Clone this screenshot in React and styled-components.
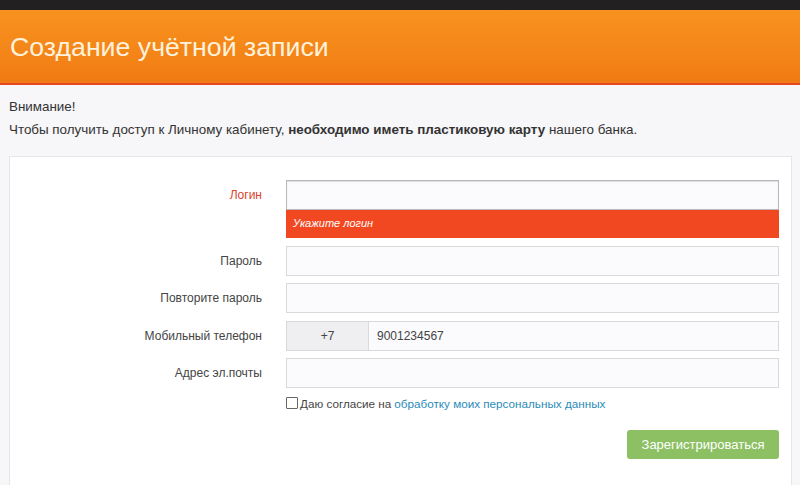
import React from 'react'
import styled, { createGlobalStyle } from 'styled-components'

const GlobalStyle = createGlobalStyle`
    html, body {
        margin: 0;
        padding: 0;
        background: #f7f6f8;
        font-family: 'Liberation Sans', Arial, sans-serif;
        color: #333;
    }
    * {
        box-sizing: border-box;
    }
`

const TopBar = styled.div`
    height: 10px;
    background: #232021;
`

const Header = styled.header`
    height: 75px;
    padding-left: 10px;
    display: flex;
    align-items: center;
    background: linear-gradient(to bottom, #f7921f 0%, #f48518 60%, #f07a14 100%);
    border-bottom: 2px solid #e4471d;
`

const Title = styled.h1`
    margin: 2px 0 0;
    font-size: 26.7px;
    font-weight: normal;
    color: #fff2dc;
`

const Notice = styled.div`
    padding: 10px 9px 0;
    font-size: 13.4px;
    line-height: 23px;
`

const Panel = styled.section`
    margin: 15px 8px 0 9px;
    padding: 23px 12px 40px 0;
    background: #fff;
    border: 1px solid #e6e5ea;
    border-bottom: none;
    display: flex;
    flex-direction: column;
    gap: 7.5px;
`

const Row = styled.div`
    display: flex;
    align-items: flex-start;
`

const Label = styled.label`
    width: 252px;
    flex-shrink: 0;
    margin-right: 24px;
    height: 30px;
    line-height: 30px;
    text-align: right;
    font-size: 12px;
    color: ${p => (p.$error ? '#d9432c' : '#444')};
`

const Field = styled.div`
    flex: 1;
    display: flex;
    flex-direction: column;
`

const Input = styled.input`
    width: 100%;
    min-width: 0;
    height: 30px;
    flex-shrink: 0;
    padding: 0 8px;
    border: 1px solid ${p => (p.$error ? '#b8b7bb' : '#d9d8dc')};
    box-shadow: ${p => (p.$error ? 'inset 0 1px 1px rgba(0,0,0,0.12)' : 'none')};
    background: #fbfafc;
    font-family: inherit;
    font-size: 12px;
    color: #444;
    outline: none;
`

const PhoneInput = styled(Input)`
    flex: 1;
`

const ErrorBar = styled.div`
    height: 28px;
    line-height: 26px;
    padding-left: 7px;
    background: #f24822;
    color: #fff;
    font-size: 11px;
    font-style: italic;
`

const PhoneGroup = styled.div`
    flex: 1;
    display: flex;
`

const Prefix = styled.div`
    width: 82px;
    flex-shrink: 0;
    height: 30px;
    line-height: 28px;
    text-align: center;
    background: #efeef1;
    border: 1px solid #d9d8dc;
    border-right: none;
    font-size: 12px;
    color: #444;
`

const Consent = styled.label`
    margin-left: 276px;
    margin-top: 1px;
    display: flex;
    align-items: center;
    font-size: 11.7px;
    color: #444;
`

const Box = styled.span`
    width: 12px;
    height: 12px;
    margin-right: 2px;
    border: 1px solid #666;
    background: #fff;
    border-radius: 1px;
`

const Link = styled.a`
    margin-left: 3px;
    color: #2a8bb8;
    text-decoration: none;
`

const Actions = styled.div`
    display: flex;
    justify-content: flex-end;
    margin-top: 13px;
`

const Button = styled.button`
    width: 152px;
    height: 29px;
    border: none;
    border-radius: 3px;
    background: #8cc063;
    color: #fff;
    font-family: inherit;
    font-size: 13px;
    cursor: pointer;
`

const fields = [
    { label: 'Пароль', type: 'password' },
    { label: 'Повторите пароль', type: 'password' },
]

export default function App() {
    return (
        <>
            <GlobalStyle />
            <TopBar />
            <Header>
                <Title>Создание учётной записи</Title>
            </Header>
            <Notice>
                <div>Внимание!</div>
                <div>
                    Чтобы получить доступ к Личному кабинету, <b>необходимо иметь пластиковую карту</b> нашего банка.
                </div>
            </Notice>
            <Panel>
                <Row>
                    <Label $error>Логин</Label>
                    <Field>
                        <Input $error />
                        <ErrorBar>Укажите логин</ErrorBar>
                    </Field>
                </Row>
                {fields.map(f => (
                    <Row key={f.label}>
                        <Label>{f.label}</Label>
                        <Field>
                            <Input type={f.type} />
                        </Field>
                    </Row>
                ))}
                <Row>
                    <Label>Мобильный телефон</Label>
                    <PhoneGroup>
                        <Prefix>+7</Prefix>
                        <PhoneInput defaultValue="9001234567" />
                    </PhoneGroup>
                </Row>
                <Row>
                    <Label>Адрес эл.почты</Label>
                    <Field>
                        <Input />
                    </Field>
                </Row>
                <Consent>
                    <Box />
                    Даю согласие на<Link href="#">обработку моих персональных данных</Link>
                </Consent>
                <Actions>
                    <Button>Зарегистрироваться</Button>
                </Actions>
            </Panel>
        </>
    )
}
